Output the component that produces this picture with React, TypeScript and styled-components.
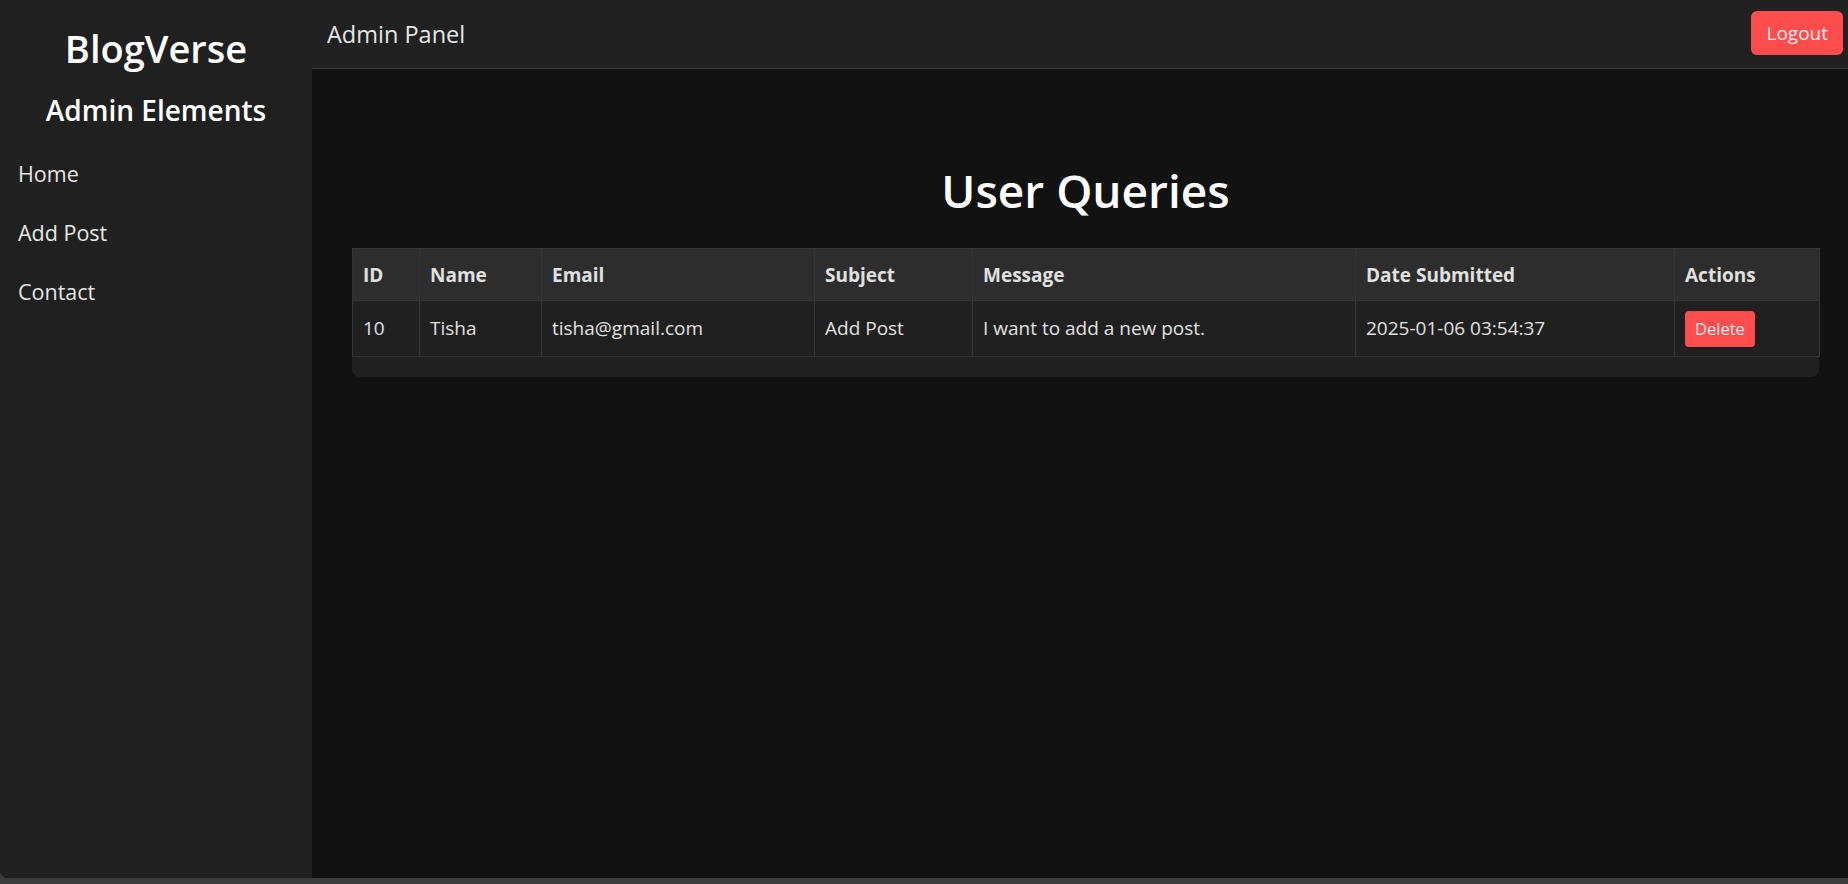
import styled, { createGlobalStyle } from 'styled-components';

const GlobalStyle = createGlobalStyle`
  * {
    box-sizing: border-box;
  }

  html,
  body {
    margin: 0;
    padding: 0;
    height: 100%;
    background-color: #3c3c3c;
    font-family: "Open Sans", "Noto Sans", sans-serif;
  }
`;

const Layout = styled.div`
  display: flex;
  height: calc(100vh - 6px);
  background-color: #121212;
  border-bottom-left-radius: 8px;
  overflow: hidden;
`;

const Sidebar = styled.aside`
  width: 312px;
  flex-shrink: 0;
  background-color: #202020;
  color: #ffffff;
  display: flex;
  flex-direction: column;
`;

const Brand = styled.h1`
  margin: 22px 0 0;
  font-size: 38px;
  font-weight: 600;
  line-height: 52px;
  text-align: center;
  color: #ffffff;
`;

const SidebarTitle = styled.h2`
  margin: 16px 0 14px;
  font-size: 28px;
  font-weight: 600;
  line-height: 40px;
  text-align: center;
  color: #ffffff;
`;

const NavList = styled.nav`
  display: flex;
  flex-direction: column;
`;

const NavItem = styled.a`
  display: block;
  padding: 0 18px;
  height: 59px;
  line-height: 59px;
  font-size: 21.5px;
  color: #e6e6e6;
  text-decoration: none;
`;

const Main = styled.div`
  flex: 1;
  display: flex;
  flex-direction: column;
  min-width: 0;
`;

const Topbar = styled.header`
  height: 69px;
  flex-shrink: 0;
  display: flex;
  align-items: center;
  justify-content: space-between;
  padding: 0 5px 0 15px;
  background-color: #212121;
  border-bottom: 1px solid #3a3a3a;
`;

const TopbarTitle = styled.span`
  font-size: 23.5px;
  color: #e6e6e6;
`;

const DangerButton = styled.button<{ $size?: 'sm' | 'lg' }>`
  border: none;
  cursor: pointer;
  font-family: inherit;
  background-color: #ff4d4d;
  color: #ececec;
  border-radius: ${(p) => (p.$size === 'sm' ? '4px' : '6px')};
  height: ${(p) => (p.$size === 'sm' ? '36px' : '44px')};
  padding: ${(p) => (p.$size === 'sm' ? '0 10px' : '0 15px')};
  font-size: ${(p) => (p.$size === 'sm' ? '16.5px' : '19px')};
  margin-top: ${(p) => (p.$size === 'sm' ? '0' : '-2px')};
`;

const Content = styled.main`
  flex: 1;
  padding: 0 29px 0 40px;
`;

const PageTitle = styled.h1`
  margin: 91px 0 28px;
  font-size: 46px;
  font-weight: 600;
  line-height: 60px;
  text-align: center;
  color: #ffffff;
`;

const TableCard = styled.div`
  background-color: #202020;
  border-radius: 8px;
  padding-bottom: 20px;
`;

const QueryTable = styled.table`
  width: 100%;
  border-collapse: collapse;
  table-layout: fixed;
  color: #e0e0e0;
  font-size: 19px;
`;

const HeaderCell = styled.th`
  background-color: #2d2d2d;
  padding: 14px 10px 13px;
  line-height: 24px;
  text-align: left;
  font-weight: 700;
  border: 1px solid #353535;
`;

const BodyCell = styled.td`
  padding: 9px 10px;
  line-height: 36px;
  border: 1px solid #353535;
  white-space: nowrap;
`;

interface Query {
  id: number;
  name: string;
  email: string;
  subject: string;
  message: string;
  date: string;
}

const columns = [
  { label: 'ID', width: 67 },
  { label: 'Name', width: 122 },
  { label: 'Email', width: 273 },
  { label: 'Subject', width: 158 },
  { label: 'Message', width: 383 },
  { label: 'Date Submitted', width: 319 },
  { label: 'Actions', width: 145 },
];

const queries: Query[] = [
  {
    id: 10,
    name: 'Tisha',
    email: 'tisha@gmail.com',
    subject: 'Add Post',
    message: 'I want to add a new post.',
    date: '2025-01-06 03:54:37',
  },
];

const App = () => {
  return (
    <>
      <GlobalStyle />
      <Layout>
        <Sidebar>
          <Brand>BlogVerse</Brand>
          <SidebarTitle>Admin Elements</SidebarTitle>
          <NavList>
            <NavItem href="#">Home</NavItem>
            <NavItem href="#">Add Post</NavItem>
            <NavItem href="#">Contact</NavItem>
          </NavList>
        </Sidebar>
        <Main>
          <Topbar>
            <TopbarTitle>Admin Panel</TopbarTitle>
            <DangerButton $size="lg">Logout</DangerButton>
          </Topbar>
          <Content>
            <PageTitle>User Queries</PageTitle>
            <TableCard>
              <QueryTable>
                <colgroup>
                  {columns.map((col) => (
                    <col key={col.label} style={{ width: col.width }} />
                  ))}
                </colgroup>
                <thead>
                  <tr>
                    {columns.map((col) => (
                      <HeaderCell key={col.label}>{col.label}</HeaderCell>
                    ))}
                  </tr>
                </thead>
                <tbody>
                  {queries.map((q) => (
                    <tr key={q.id}>
                      <BodyCell>{q.id}</BodyCell>
                      <BodyCell>{q.name}</BodyCell>
                      <BodyCell>{q.email}</BodyCell>
                      <BodyCell>{q.subject}</BodyCell>
                      <BodyCell>{q.message}</BodyCell>
                      <BodyCell>{q.date}</BodyCell>
                      <BodyCell>
                        <DangerButton $size="sm">Delete</DangerButton>
                      </BodyCell>
                    </tr>
                  ))}
                </tbody>
              </QueryTable>
            </TableCard>
          </Content>
        </Main>
      </Layout>
    </>
  );
};

export default App;
